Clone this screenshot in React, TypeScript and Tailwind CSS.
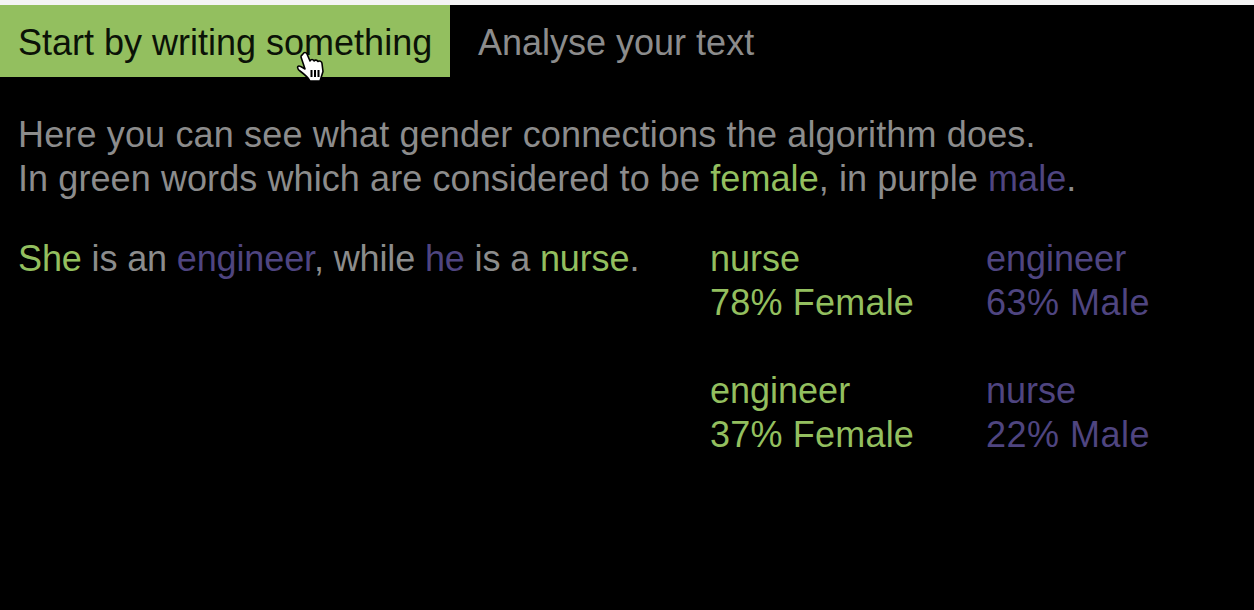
const green = "text-[#93bf5f]";
const purple = "text-[#4f4580]";

function HandCursor() {
  return (
    <svg
      className="absolute left-[296px] top-[50px]"
      width="32"
      height="34"
      viewBox="0 0 32 34"
      fill="none"
    >
      <path
        d="M7 4c1-2 3-2 4 0l3 7c1-2 3-2 4 0c1-1.500 3-1 4 .5c1-1 4-.5 4 2l1 8l-3 9.500H14c-2-4-6-7-10-10c-3-2-3-5-1-5c2 0 4 2 6 3L5 7c-.5-1 1-2 2-3z"
        fill="#fff"
        stroke="#000"
        strokeWidth="1.6"
        strokeLinejoin="round"
      />
      <path d="M15.500 20v7M19 20v7M22.500 20v7" stroke="#000" strokeWidth="2" />
    </svg>
  );
}

function Stat({ word, value, color, spacing }: { word: string; value: string; color: string; spacing: string }) {
  return (
    <div className={color}>
      <div>{word}</div>
      <div className={spacing}>{value}</div>
    </div>
  );
}

export default function App() {
  return (
    <div className="relative h-[610px] w-[1254px] overflow-hidden bg-black pt-[5px] font-['Liberation_Sans',Arial,sans-serif] text-[36px] leading-[44px] text-[#8c8c8c]">
      <div className="absolute inset-x-0 top-0 h-[5px] bg-[#f4f4f4]" />

      <div className="flex h-[72px] items-center">
        <div className="flex h-full w-[450px] items-center bg-[#93bf5f] pl-[18px] pt-[4px] text-[#0b1207]">
          Start by writing something
        </div>
        <div className="pl-[28px] pt-[4px]">Analyse your text</div>
      </div>

      <div className="pl-[18px] pt-[36px]">
        <p className="tracking-[0.15px]">Here you can see what gender connections the algorithm does.</p>
        <p className="tracking-[0.09px]">
          In green words which are considered to be <span className={green}>female</span>, in
          purple <span className={purple}>male</span>.
        </p>
      </div>

      <div className="flex pl-[18px] pt-[36px]">
        <p className="w-[692px] tracking-[-0.13px]">
          <span className={green}>She</span> is an <span className={purple}>engineer</span>, while{" "}
          <span className={purple}>he</span> is a <span className={green}>nurse</span>.
        </p>
        <div className="grid grid-cols-[276px_auto] gap-y-[44px]">
          <Stat word="nurse" value="78% Female" color={green} spacing="tracking-[0.2px]" />
          <Stat word="engineer" value="63% Male" color={purple} spacing="tracking-[0.5px]" />
          <Stat word="engineer" value="37% Female" color={green} spacing="tracking-[0.2px]" />
          <Stat word="nurse" value="22% Male" color={purple} spacing="tracking-[0.5px]" />
        </div>
      </div>

      <HandCursor />
    </div>
  );
}
